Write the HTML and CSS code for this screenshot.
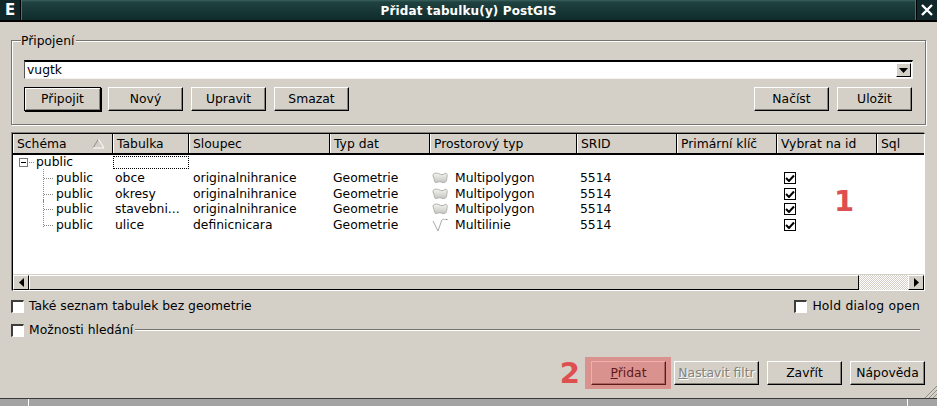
FILE: index.html
```html
<!DOCTYPE html>
<html lang="cs">
<head>
<meta charset="utf-8">
<title>Přidat tabulku(y) PostGIS</title>
<link rel="stylesheet" href="styles.css">
</head>
<body>
<svg class="defs" width="0" height="0"><defs>
  <linearGradient id="poly" x1="0" y1="0" x2="0" y2="1"><stop offset="0" stop-color="#f4f4f2"/><stop offset="1" stop-color="#c4c4c0"/></linearGradient>
</defs></svg>
<div class="window">
  <header class="titlebar">
    <div class="tb-btn tb-e">E</div>
    <div class="tb-title">Přidat tabulku(y) PostGIS</div>
    <div class="tb-btn tb-x">
      <svg width="12" height="12" viewBox="0 0 12 12"><path d="M1 1L11 11M11 1L1 11" stroke="#fff" stroke-width="2.4" fill="none"/></svg>
    </div>
  </header>

  <main class="content">
    <section class="group">
      <span class="group-label">Připojení</span>
      <div class="combo">
        <span class="combo-text">vugtk</span>
        <span class="combo-arrow"><svg width="9" height="5" viewBox="0 0 9 5"><path d="M0 0H9L4.5 5Z" fill="#000"/></svg></span>
      </div>
      <div class="conn-buttons">
        <button class="btn btn-default">Připojit</button>
        <button class="btn">Nový</button>
        <button class="btn">Upravit</button>
        <button class="btn">Smazat</button>
        <span class="spacer"></span>
        <button class="btn">Načíst</button>
        <button class="btn">Uložit</button>
      </div>
    </section>

    <section class="table">
      <div class="row head">
        <div class="th th-sort">Schéma<svg class="sort" width="13" height="11" viewBox="0 0 13 11"><path d="M6.5 1L1 10" fill="none" stroke="#8f8c85"/><path d="M1 10H12L6.5 1" fill="none" stroke="#fff"/></svg></div>
        <div class="th">Tabulka</div>
        <div class="th">Sloupec</div>
        <div class="th">Typ dat</div>
        <div class="th">Prostorový typ</div>
        <div class="th">SRID</div>
        <div class="th">Primární klíč</div>
        <div class="th">Vybrat na id</div>
        <div class="th">Sql</div>
      </div>
      <div class="tbody">
        <div class="row">
          <div class="td tree-root"><span class="expander"></span><span class="stub"></span>public</div>
          <div class="td focus"></div>
        </div>
        <div class="row">
          <div class="td tree-leaf"><span class="branch"></span>public</div>
          <div class="td col-name">obce</div><div class="td col-geom">originalnihranice</div><div class="td">Geometrie</div>
          <div class="td type"><svg class="ico" width="16" height="12" viewBox="0 0 16 12"><path d="M1 3.500C1 1 4 0.500 6.500 1.500C9 3 11 3 13 1.500C15 0.500 15.500 3 15 5.500C14.500 9 14 11 11 10.500C8.500 9.500 6.500 9.500 4.500 10.500C2.500 11 2.500 8.500 2 6.500Z" fill="url(#poly)" stroke="#b0b0ac"/></svg>Multipolygon</div>
          <div class="td">5514</div><div class="td"></div>
          <div class="td check-cell"><span class="tick"><svg width="10" height="8" viewBox="0 0 10 8"><path d="M1 4L4 7L9 1.500" stroke="#000" stroke-width="2" fill="none"/></svg></span></div>
        </div>
        <div class="row">
          <div class="td tree-leaf"><span class="branch"></span>public</div>
          <div class="td col-name">okresy</div><div class="td col-geom">originalnihranice</div><div class="td">Geometrie</div>
          <div class="td type"><svg class="ico" width="16" height="12" viewBox="0 0 16 12"><path d="M1 3.500C1 1 4 0.500 6.500 1.500C9 3 11 3 13 1.500C15 0.500 15.500 3 15 5.500C14.500 9 14 11 11 10.500C8.500 9.500 6.500 9.500 4.500 10.500C2.500 11 2.500 8.500 2 6.500Z" fill="url(#poly)" stroke="#b0b0ac"/></svg>Multipolygon</div>
          <div class="td">5514</div><div class="td"></div>
          <div class="td check-cell"><span class="tick"><svg width="10" height="8" viewBox="0 0 10 8"><path d="M1 4L4 7L9 1.500" stroke="#000" stroke-width="2" fill="none"/></svg></span></div>
        </div>
        <div class="row">
          <div class="td tree-leaf"><span class="branch"></span>public</div>
          <div class="td col-name">stavebni...</div><div class="td col-geom">originalnihranice</div><div class="td">Geometrie</div>
          <div class="td type"><svg class="ico" width="16" height="12" viewBox="0 0 16 12"><path d="M1 3.500C1 1 4 0.500 6.500 1.500C9 3 11 3 13 1.500C15 0.500 15.500 3 15 5.500C14.500 9 14 11 11 10.500C8.500 9.500 6.500 9.500 4.500 10.500C2.500 11 2.500 8.500 2 6.500Z" fill="url(#poly)" stroke="#b0b0ac"/></svg>Multipolygon</div>
          <div class="td">5514</div><div class="td"></div>
          <div class="td check-cell"><span class="tick"><svg width="10" height="8" viewBox="0 0 10 8"><path d="M1 4L4 7L9 1.500" stroke="#000" stroke-width="2" fill="none"/></svg></span></div>
        </div>
        <div class="row">
          <div class="td tree-leaf tree-last"><span class="branch"></span>public</div>
          <div class="td col-name">ulice</div><div class="td col-geom">definicnicara</div><div class="td">Geometrie</div>
          <div class="td type"><svg class="ico" width="16" height="14" viewBox="0 0 16 14"><path d="M1 3L6 13L9.500 3C10.500 0.500 12 1 13 2" fill="none" stroke="#a9a9a5"/><path d="M13.500 1.500H15.500" stroke="#888"/></svg>Multilinie</div>
          <div class="td">5514</div><div class="td"></div>
          <div class="td check-cell"><span class="tick"><svg width="10" height="8" viewBox="0 0 10 8"><path d="M1 4L4 7L9 1.500" stroke="#000" stroke-width="2" fill="none"/></svg></span></div>
        </div>
      </div>
      <div class="hscroll">
        <span class="sb-arrow"><svg width="5" height="9" viewBox="0 0 5 9"><path d="M5 0V9L0 4.500Z" fill="#000"/></svg></span>
        <span class="sb-thumb"></span>
        <span class="sb-track"></span>
        <span class="sb-arrow sb-right"><svg width="5" height="9" viewBox="0 0 5 9"><path d="M0 0V9L5 4.500Z" fill="#000"/></svg></span>
      </div>
    </section>

    <div class="options">
      <label class="cb-line"><span class="cb"></span>Také seznam tabulek bez geometrie</label>
      <label class="cb-line cb-hold"><span class="cb"></span>Hold dialog open</label>
    </div>

    <div class="search">
      <label class="cb-line"><span class="cb"></span>Možnosti hledání</label>
      <span class="search-rule"></span>
    </div>

    <div class="actions">
      <span class="badge-two">2</span>
      <span class="add-wrap">
        <button class="btn btn-add"><span><u>P</u>řidat</span></button>
        <span class="highlight"></span>
      </span>
      <button class="btn btn-disabled"><span><u>N</u>astavit filtr</span></button>
      <button class="btn btn-close">Zavřít</button>
      <button class="btn btn-help">Nápověda</button>
    </div>
    <span class="badge-one">1</span>
    <svg class="grip" width="13" height="13" viewBox="0 0 13 13"><path d="M13 1L1 13M13 5L5 13M13 9L9 13" stroke="#8f8c85" stroke-width="1"/></svg>
  </main>

  <footer class="statusbar"><span class="status-cell"></span><span class="status-cell grow"></span><span class="status-cell end"></span></footer>
</div>
</body>
</html>
```
FILE: styles.css
```css
* { box-sizing: border-box; }
html, body { margin: 0; padding: 0; }
body {
  width: 937px;
  height: 406px;
  overflow: hidden;
  background: #d4d0c8;
  font-family: "DejaVu Sans", sans-serif;
  font-size: 12.35px;
  line-height: 16px;
  color: #000;
}
.defs { position: absolute; }
.window { display: flex; flex-direction: column; height: 406px; }

.titlebar {
  flex: none;
  display: flex;
  height: 22px;
  background: linear-gradient(#3c6360 0, #1f4240 2px, #0f2b2c 100%);
  border-bottom: 2px solid #000;
  color: #fff;
}
.tb-btn {
  flex: none;
  width: 21px;
  display: flex;
  align-items: center;
  justify-content: center;
  background: #10282a;
  font-weight: bold;
  font-size: 15px;
}
.tb-e { border-right: 1px solid #000; box-shadow: 1px 0 #4f6f6c; }
.tb-x { border-left: 1px solid #000; box-shadow: -1px 0 #4f6f6c; }
.tb-title { flex: 1; padding-top: 3px; text-align: center; font-weight: bold; font-size: 12px; letter-spacing: .12px; }

.content {
  flex: 1;
  position: relative;
  display: flex;
  flex-direction: column;
  padding: 18px 12px 0 11px;
}

.group {
  position: relative;
  width: 915px;
  height: 85px;
  padding: 19px 12px 0 12px;
  border: 1px solid #77746d;
  box-shadow: inset 1px 1px #fff, 1px 1px #fff;
}
.group-label {
  position: absolute;
  top: -8px;
  left: 9px;
  padding: 0 2px 0 0;
  background: #d4d0c8;
}
.combo {
  display: flex;
  align-items: center;
  height: 19px;
  width: 889px;
  background: #fff;
  border-style: solid;
  border-width: 2px 1px 1px 1px;
  border-color: #000 #f4f2ee #f4f2ee #555;
  padding: 0 1px 0 2px;
}
.combo-text { flex: 1; line-height: 15px; }
.combo-arrow {
  width: 15px;
  height: 14px;
  display: flex;
  align-items: center;
  justify-content: center;
  background: #d4d0c8;
  border: 1px solid;
  border-color: #fff #000 #000 #fff;
}
.conn-buttons { display: flex; gap: 8px; margin-top: 8px; width: 888px; }
.spacer { flex: 1; }
.btn {
  width: 75px;
  height: 24px;
  padding: 0;
  background: #d4d0c8;
  border: 1px solid;
  border-color: #fff #000 #000 #fff;
  box-shadow: inset -1px -1px #86837c;
  font: 12.35px/16px "DejaVu Sans", sans-serif;
  color: #000;
  text-align: center;
}
.btn-default {
  width: 77px;
  margin-right: -1px;
  border-color: #000;
  box-shadow: inset 1px 1px #fff, inset -1px -1px #86837c, 1px 1px #000;
}

.table {
  display: flex;
  flex-direction: column;
  width: 913px;
  height: 158px;
  margin-top: 8px;
  margin-left: 1px;
  border: 1px solid;
  border-color: #000 #fff #fff #000;
  box-shadow: -1px -1px #86837c;
  background: #fff;
}
.row {
  display: grid;
  grid-template-columns: 100px 76px 141px 100px 147px 100px 100px 100px 47px;
  height: 15.8px;
}
.head {
  flex: none;
  height: 21px;
  background: #d4d0c8;
  border-bottom: 2px solid #000;
}
.th {
  position: relative;
  padding: 2px 0 0 3px;
  border-right: 1px solid #000;
  border-left: 1px solid #fff;
  white-space: nowrap;
  overflow: hidden;
}
.th:last-child { border-right: 0; }
.sort { position: absolute; right: 7px; top: 4px; }
.tbody { flex: 1; margin-top: -1px; }
.td { padding-left: 3px; white-space: nowrap; position: relative; }
.col-name { padding-left: 2px; }
.col-geom { padding-left: 4px; }
.focus { margin-top: 2px; border: 1px dotted #000; height: 13px; }
.tree-root { display: flex; align-items: center; padding-left: 6px; }
.expander {
  position: relative;
  width: 9px;
  height: 9px;
  border: 1px solid #777;
  background: linear-gradient(#000, #000) center / 5px 1px no-repeat;
}
.stub { width: 5px; margin: 0 2px 0 1px; border-top: 1px dotted #888; }
.tree-leaf { padding-left: 43px; }
.branch {
  position: absolute;
  left: 30px;
  top: -1px;
  bottom: 0;
  width: 10px;
  border-left: 1px dotted #888;
}
.branch::after {
  content: "";
  position: absolute;
  left: 0;
  top: 9px;
  width: 9px;
  border-top: 1px dotted #888;
}
.tree-last .branch { bottom: 6px; }
.type { display: flex; align-items: center; padding-left: 2px; }
.ico { flex: none; margin-right: 7px; }
.check-cell { padding-left: 7px; display: flex; align-items: center; }
.tick {
  width: 12px;
  height: 12px;
  display: flex;
  align-items: center;
  justify-content: center;
  background: #fff;
  border: 1px solid #000;
}

.hscroll {
  flex: none;
  display: flex;
  height: 16px;
  background: #d4d0c8;
  border-top: 1px solid #d4d0c8;
}
.sb-arrow {
  flex: none;
  width: 16px;
  display: flex;
  align-items: center;
  justify-content: center;
  background: #d4d0c8;
  border: 1px solid;
  border-color: #fff #000 #000 #fff;
}
.sb-thumb {
  flex: none;
  width: 830px;
  border: 1px solid;
  border-color: #fff #000 #000 #fff;
  background: #d4d0c8;
}
.sb-track {
  flex: 1;
  background: repeating-conic-gradient(#d4d0c8 0 25%, #fff 0 50%) 0 0 / 2px 2px;
}

.options {
  display: flex;
  justify-content: space-between;
  margin-top: 7px;
  padding-right: 5px;
  height: 16px;
}
.cb-line { display: flex; align-items: center; gap: 5px; white-space: nowrap; }
.cb-hold { letter-spacing: .2px; }
.cb {
  flex: none;
  width: 13px;
  height: 13px;
  background: #fff;
  border-style: solid;
  border-width: 2px 1px 1px 2px;
  border-color: #3f3d39 #fff #fff #3f3d39;
}
.search { display: flex; align-items: center; margin-top: 8px; height: 16px; }
.search-rule {
  flex: 1;
  margin-left: 2px;
  margin-right: 5px;
  height: 2px;
  border-top: 1px solid #77746d;
  border-bottom: 1px solid #fff;
}

.actions {
  display: flex;
  align-items: center;
  justify-content: flex-end;
  gap: 8px;
  margin-top: 23px;
  height: 24px;
}
.add-wrap { position: relative; display: flex; }
.btn-add { width: 75px; height: 24px; }
.highlight {
  position: absolute;
  left: -6px;
  top: -4px;
  right: -5px;
  bottom: -4px;
  background: rgba(224, 60, 60, .42);
}
.btn-disabled { width: 85px; color: #85827b; text-shadow: 1px 1px #fff; }
.btn-close { width: 75px; }
.btn-help { width: 75px; }
.badge-two {
  margin-right: 3px;
  font-weight: bold;
  font-size: 29px;
  line-height: 30px;
  color: #de4f4f;
}
.badge-one {
  position: absolute;
  left: 834px;
  top: 160px;
  font-weight: bold;
  font-size: 29px;
  line-height: 38px;
  color: #de4f4f;
}
.grip { position: absolute; right: 0; bottom: 0; }

.statusbar {
  flex: none;
  display: flex;
  height: 8px;
  background: #a3a3a3;
  border-top: 1px solid #3a3a3a;
}
.status-cell { width: 29px; border-right: 1px solid #fff; }
.status-cell.grow { width: auto; flex: 1; }
.status-cell.end { width: 29px; border-right: 0; }
```
